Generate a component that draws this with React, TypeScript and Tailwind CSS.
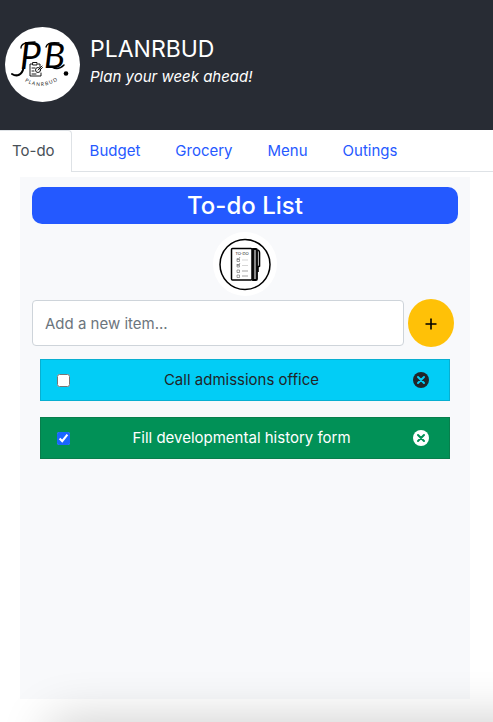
import { useState } from "react";

const tabs = ["Budget", "Grocery", "Menu", "Outings"];

function Logo() {
  return (
    <svg viewBox="0 0 75 75" className="size-[75px] shrink-0" role="img" aria-label="Planrbud logo">
      <circle cx="37.5" cy="37.5" r="37.5" fill="#fff" />
      <g fontFamily="Lato, sans-serif" fontStyle="italic" fill="#000">
        <text x="15" y="42" fontSize="37">P</text>
        <text x="39" y="41" fontSize="35">B</text>
      </g>
      <g fill="none" stroke="#000" strokeLinecap="round">
        <path d="M18.500 41C17 48 12 50 7 47" strokeWidth="2" />
        <path d="M16 21C16 17 22 15 30 15" strokeWidth="1.300" />
        <path d="M41 20C42 16 47 15 54 16" strokeWidth="1.300" />
        <path d="M47 40C52 43 56 41 59 38" strokeWidth="1.500" />
        <g strokeWidth="0.900">
          <path d="M27 37h-2v12h11v-3M35 40v-3h-2M28 35.500h4v2.500h-4zM27 41h3M27 44h2M27 47h4" />
          <circle cx="33" cy="43" r="2.500" />
          <path d="M33 43l4-4M35.500 42.500l2-2" />
        </g>
      </g>
      <circle cx="61" cy="46.500" r="2.300" fill="#000" />
      <path id="logo-arc" d="M18 53Q38 67 60 48" fill="none" />
      <text fontFamily="Lato, sans-serif" fontSize="5" fill="#222">
        <textPath href="#logo-arc" startOffset="2">P L A N R B U D</textPath>
      </text>
    </svg>
  );
}

function NotebookBadge() {
  return (
    <svg viewBox="0 0 64 64" className="size-16" role="img" aria-label="To-do notebook">
      <circle cx="32" cy="32" r="32" fill="#fff" />
      <circle cx="32" cy="32.500" r="25" fill="none" stroke="#000" strokeWidth="1.500" />
      <rect x="18.500" y="16.500" width="20.500" height="31.500" rx="1" fill="#fff" stroke="#000" strokeWidth="1.500" />
      <path d="M40 17h3q1 0 1 1v29q0 1-1 1h-3z" fill="#888" stroke="#000" strokeWidth="1.800" />
      <path d="M44.500 18.500q2-.5 2 2.500v13l-1.500 1v5" fill="none" stroke="#000" strokeWidth="1.600" />
      <text x="22.500" y="23" fontFamily="Lato, sans-serif" fontSize="4" fill="#222">TO-DO</text>
      <g fill="none" stroke="#666" strokeWidth="0.600">
        <path d="M24 27h2.500v2.500H24zM24 32.500h2.500V35H24zM24 38h2.500v2.500H24zM24 43h2.500v2.500H24z" />
        <path d="M24 26l1 2 2-3M24 32l1 2 2-3M29 39h6M29 44h6" />
        <path d="M29 28h6M29 33.500h6" stroke="#bbb" />
      </g>
    </svg>
  );
}

function RemoveIcon({ cross }: { cross: string }) {
  return (
    <svg viewBox="0 0 16 16" className="size-4" aria-hidden="true">
      <circle cx="8" cy="8" r="8" fill="currentColor" />
      <path d="M5 5l6 6M11 5l-6 6" stroke={cross} strokeWidth="2" strokeLinecap="round" />
    </svg>
  );
}

export default function App() {
  const [items, setItems] = useState([
    { text: "Call admissions office", done: false },
    { text: "Fill developmental history form", done: true },
  ]);
  const [draft, setDraft] = useState("");

  return (
    <div className="relative min-h-screen overflow-hidden bg-white font-['Inter',sans-serif] text-[15px] leading-6 text-[#212529]">
      <header className="flex h-[130px] items-start gap-2.5 bg-[#282c34] px-[5px] pt-[27px] text-white">
        <Logo />
        <div className="pt-1.5">
          <h1 className="text-[23px] leading-8">PLANRBUD</h1>
          <p className="italic">Plan your week ahead!</p>
        </div>
      </header>

      <nav className="flex h-[42px] border-b border-[#dee2e6]">
        <a href="#todo" className="-mb-px rounded-tr border-t border-r border-[#dee2e6] bg-white pt-2 pr-4 pb-2 pl-3 text-[#495057]">To-do</a>
        <div className="flex pl-px">
          {tabs.map((tab) => (
            <a key={tab} href={"#" + tab.toLowerCase()} className="pt-[9px] pr-[18px] pb-2 pl-[17px] text-[#2659ff]">{tab}</a>
          ))}
        </div>
      </nav>

      <main className="mt-[5px] mr-[23px] ml-5 h-[522px] bg-[#f8f9fb] px-3 pt-2.5">
        <h2 className="rounded-[10px] bg-[#2459ff] text-center text-2xl leading-[37px] font-medium text-white">To-do List</h2>
        <div className="mt-2 flex justify-center">
          <NotebookBadge />
        </div>
        <form
          className="mt-[3px] flex items-center gap-1 pr-1"
          onSubmit={(e) => {
            e.preventDefault();
            if (draft) setItems([...items, { text: draft, done: false }]);
            setDraft("");
          }}
        >
          <input
            type="text"
            aria-label="Add a new item"
            placeholder="Add a new item..."
            value={draft}
            onChange={(e) => setDraft(e.target.value)}
            className="h-[46px] min-w-0 flex-1 rounded border border-[#ced4da] bg-white px-3 placeholder:text-[#6c757d]"
          />
          <button type="submit" aria-label="Add" className="flex h-12 w-[46px] items-center justify-center rounded-[50%] bg-[#ffc107] text-black">
            <svg viewBox="0 0 12 12" className="mt-0.5 size-3" stroke="currentColor" strokeWidth="1.600" aria-hidden="true">
              <path d="M6 .5v11M.5 6h11" />
            </svg>
          </button>
        </form>
        <ul className="mt-3 flex flex-col gap-4 px-2">
          {items.map((item, i) => (
            <li
              key={i}
              className={
                item.done
                  ? "flex h-[42px] items-center border border-[#087e4c] bg-[#019157] px-4 text-white"
                  : "flex h-[42px] items-center border border-[#08afd1] bg-[#02cdf6] px-4"
              }
            >
              <input
                type="checkbox"
                id={"item-" + i}
                checked={item.done}
                onChange={() => setItems(items.map((it, j) => (j === i ? { ...it, done: !it.done } : it)))}
                className="size-[13px] accent-[#1a66ff]"
              />
              <label htmlFor={"item-" + i} className="flex-1 text-center">{item.text}</label>
              <button type="button" aria-label="Remove" className="mr-1" onClick={() => setItems(items.filter((_, j) => j !== i))}>
                <RemoveIcon cross={item.done ? "#019157" : "#02cdf6"} />
              </button>
            </li>
          ))}
        </ul>
      </main>
      <div className="pointer-events-none absolute -right-20 -bottom-12 left-15 h-10 shadow-[0_0_50px_10px_rgba(0,0,0,0.2)]" />
    </div>
  );
}
